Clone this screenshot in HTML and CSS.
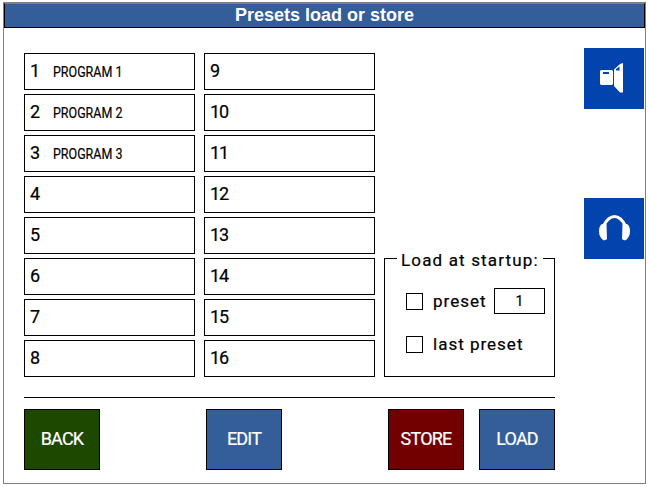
FILE: index.html
```html
<!DOCTYPE html>
<html lang="en">
<head>
<meta charset="utf-8">
<title>Presets load or store</title>
<link rel="stylesheet" href="styles.css">
</head>
<body>
<div class="frame">
  <header class="title">Presets load or store</header>
  <div class="content">
    <main class="main">
      <div class="upper">
        <div class="presets">
          <div class="slot"><span class="num">1</span><span class="name">PROGRAM 1</span></div>
          <div class="slot"><span class="num">2</span><span class="name">PROGRAM 2</span></div>
          <div class="slot"><span class="num">3</span><span class="name">PROGRAM 3</span></div>
          <div class="slot"><span class="num">4</span></div>
          <div class="slot"><span class="num">5</span></div>
          <div class="slot"><span class="num">6</span></div>
          <div class="slot"><span class="num">7</span></div>
          <div class="slot"><span class="num">8</span></div>
          <div class="slot"><span class="num">9</span></div>
          <div class="slot"><span class="num">10</span></div>
          <div class="slot"><span class="num">11</span></div>
          <div class="slot"><span class="num">12</span></div>
          <div class="slot"><span class="num">13</span></div>
          <div class="slot"><span class="num">14</span></div>
          <div class="slot"><span class="num">15</span></div>
          <div class="slot"><span class="num">16</span></div>
        </div>
        <fieldset class="startup">
          <legend class="startup-title">Load at startup:</legend>
          <div class="option option-preset">
            <span class="check"></span><span class="label">preset</span><span class="value">1</span>
          </div>
          <div class="option">
            <span class="check"></span><span class="label">last preset</span>
          </div>
        </fieldset>
      </div>
      <div class="actions">
        <button class="btn btn-back">BACK</button>
        <button class="btn btn-blue btn-edit">EDIT</button>
        <button class="btn btn-store">STORE</button>
        <button class="btn btn-blue btn-load">LOAD</button>
      </div>
    </main>
    <aside class="side">
      <div class="side-btn">
        <svg class="icon-speaker" width="24" height="30" viewBox="0 0 24 30"><path fill="#fff" fill-rule="evenodd" d="M1 7h11l1 1v13l-1 1H1l-1-1V8zM3 9v2h6V9z"/><path fill="#fff" fill-rule="evenodd" d="M14 6.500 20 1l3-1V29.500h-3L14 23zM16 6v1.500h3.500V3.500z"/></svg>
      </div>
      <div class="side-btn">
        <svg class="icon-phones" width="31" height="26" viewBox="0 0 31 26"><path fill="none" stroke="#fff" stroke-width="3" d="M4.500 11C7 6 10 1.500 15.500 1.500S24 6 26.500 11"/><path fill="#fff" d="M7.500 9 8 24q-2 2-4 1-4-3-4-9 0-5 3-7z"/><path fill="#fff" d="M23.500 9 23 24q2 2 4 1 4-3 4-9 0-5-3-7z"/></svg>
      </div>
    </aside>
  </div>
</div>
</body>
</html>
```
FILE: styles.css
```css
* { box-sizing: border-box; }
html, body { margin: 0; padding: 0; background: #fff; }
body { width: 649px; height: 487px; padding: 2px 3px 3px 3px; font-family: Roboto, sans-serif; color: #000; }
.frame { width: 643px; height: 482px; border: 1px solid #808080; background: #fff; }
.title {
  height: 25px;
  background: #335e99;
  border: 1px solid #000;
  border-top-color: #808080;
  color: #fff;
  font: bold 18px/22px "Liberation Sans", sans-serif;
  text-align: center;
}
.content { display: flex; padding: 25px 0 0 20px; }
.main { width: 531px; flex: none; }
.upper { display: flex; gap: 9px; height: 324px; }
.presets {
  display: grid;
  grid-template-rows: repeat(8, 37px);
  grid-auto-flow: column;
  grid-auto-columns: 171px;
  gap: 4px 9px;
}
.slot {
  display: flex;
  align-items: center;
  border: 1px solid #000;
  padding: 0 0 1px 5px;
}
.num { font-size: 18px; line-height: 20px; width: 23px; letter-spacing: -1px; -webkit-text-stroke: .2px #000; }
.name { font-size: 14.500px; white-space: nowrap; transform: scaleX(.86); transform-origin: left center; margin-top: 2px; -webkit-text-stroke: .2px #000; }
.startup {
  margin: 0;
  padding: 0 0 0 21px;
  min-width: 0;
  width: 171px;
  height: 130px;
  align-self: flex-end;
  border: 1px solid #000;
}
.startup-title { padding: 4px 4px 0; margin-left: -9px; font-size: 17px; line-height: 18px; letter-spacing: 1.150px; -webkit-text-stroke: .2px #000; }
.option { display: flex; align-items: center; height: 26px; font-size: 17px; letter-spacing: 1px; -webkit-text-stroke: .2px #000; }
.option-preset { margin: 19px 0 17px; }
.check { width: 17px; height: 17px; border: 1px solid #000; flex: none; margin-right: 10px; }
.value { width: 51px; height: 26px; border: 1px solid #000; margin-left: auto; margin-right: 9px; font-size: 14px; line-height: 24px; text-align: center; letter-spacing: 0; }
.actions {
  display: grid;
  grid-template-columns: repeat(6, 76px);
  column-gap: 15px;
  margin-top: 20px;
  border-top: 1px solid #000;
  padding-top: 11px;
}
.btn {
  height: 61px;
  padding: 0 0 3px;
  border: 1px solid #000;
  color: #fff;
  font: 400 18px Roboto, sans-serif;
  letter-spacing: -.8px;
  -webkit-text-stroke: .2px #fff;
}
.btn-back { background: #1c4800; grid-column: 1; }
.btn-blue { background: #335e99; }
.btn-edit { grid-column: 3; }
.btn-store { background: #720000; grid-column: 5; }
.btn-load { grid-column: 6; }
.side { margin: -5px 0 0 29px; width: 60px; }
.side-btn {
  width: 60px;
  height: 61px;
  background: #0343ad;
  display: flex;
  align-items: center;
  justify-content: center;
}
.side-btn + .side-btn { margin-top: 89px; }
.icon-speaker { margin: 0 4px 2px 0; }
.icon-phones { margin-bottom: 2px; }
```
